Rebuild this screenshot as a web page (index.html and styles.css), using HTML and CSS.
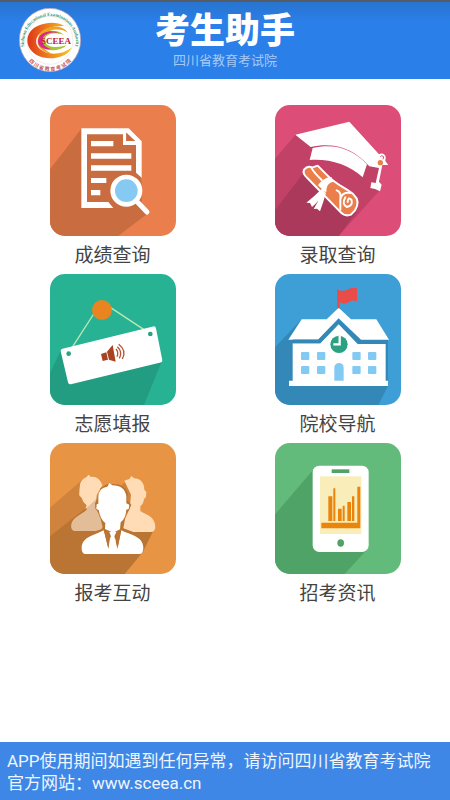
FILE: index.html
```html
<!DOCTYPE html>
<html lang="zh-CN">
<head>
    <meta charset="UTF-8">
    <meta name="viewport" content="width=device-width, initial-scale=1.0">
    <title>考生助手</title>
    <link rel="stylesheet" href="styles.css">
</head>
<body>
    <header class="header">
        <svg class="logo" viewBox="0 0 186 192" role="img" aria-label="SCEEA">
            <defs>
                <linearGradient id="swirl" x1="0" y1="0" x2="1" y2="0">
                    <stop offset="0" stop-color="#df3517"/>
                    <stop offset="0.5" stop-color="#ee8420"/>
                    <stop offset="1" stop-color="#fac51c"/>
                </linearGradient>
                <path id="ringTop" d="M17 123A78 81 0 1 1 169 123"/>
                <path id="ringBottom" d="M13 132A86 89 0 0 0 173 132"/>
            </defs>
            <ellipse cx="93" cy="96" rx="92" ry="95" fill="#fff" stroke="#b99bb0" stroke-width="2"/>
            <ellipse cx="93" cy="97" rx="69" ry="72" fill="none" stroke="#d3c3cc" stroke-width="1"/>
            <text class="logo-en"><textPath href="#ringTop" startOffset="50%" text-anchor="middle">Sichuan Educational Examinations Authority</textPath></text>
            <text class="logo-cn"><textPath href="#ringBottom" startOffset="50%" text-anchor="middle">四 川 省 教 育 考 试 院</textPath></text>
            <path fill="url(#swirl)" d="M136 54C106 35 52 46 33 72C10 108 40 150 92 151C126 151 151 137 157 119C128 143 78 143 58 118C36 87 74 52 136 54Z"/>
            <path fill="#eda51d" d="M146 74C133 50 83 51 64 75C43 107 65 134 99 137C70 126 57 102 73 82C90 62 126 59 146 74Z"/>
            <path fill="#a9c52f" d="M135 81C116 62 80 65 67 84C50 111 79 132 112 126C128 123 137 118 142 112C112 122 81 117 77 99C74 80 105 68 135 81Z"/>
            <path fill="#df2589" d="M121 77C100 63 69 71 60 88C49 111 70 128 96 123C76 118 63 101 73 87C82 75 102 70 121 77Z"/>
            <text class="logo-name" x="66" y="108">SCEEA</text>
        </svg>
        <div class="heading">
            <h1>考生助手</h1>
            <p class="subtitle">四川省教育考试院</p>
        </div>
    </header>

    <main class="menu">
        <a class="menu-item" href="#score">
            <svg class="tile orange" viewBox="29 29 378 393" aria-hidden="true">
                <path fill="#c96d40" d="M123 100L29 222V423H232L325 352L300 240V140L264 100Z"/>
                <path fill="#ea7f4d" d="M304 243L340 300V352H325L304 330Z"/>
                <path fill="#fff" fill-rule="evenodd" d="M123 99H265L304 138V247L287 232V149H248V117H140V320H204L219 338H123ZM258 112V137H284Z"/>
                <path fill="#c96d40" d="M258 112V137H284Z"/>
                <path fill="#fff" d="M152 137H219V153H152ZM152 174H273V190H152ZM152 210H273V226H152ZM152 248H198V263H152ZM152 284H180V300H152Z"/>
                <path d="M292 321L320 350" stroke="#fff" stroke-width="15" stroke-linecap="round"/>
                <circle cx="258" cy="286" r="41" fill="#86c9f2" stroke="#fff" stroke-width="14"/>
            </svg>
            <span>成绩查询</span>
        </a>

        <a class="menu-item" href="#admission">
            <svg class="tile pink" viewBox="29 29 378 393" aria-hidden="true">
                <path fill="#c24267" d="M90 118L29 190V423H219L342 286L345 205Z"/>
                <path fill="#aa395b" d="M114 234L29 345V423H219L274 350Z"/>
                <path fill="#fff" d="M90 118L252 79L341 177C348 171 362 176 361 188L360 197L369 209L351 209L341 259L349 268L344 288L329 281L315 278L318 261L331 263L341 218L312 213C266 158 204 139 136 155Z"/>
                <path fill="#fff" d="M142 158C205 144 260 160 305 207L292 246C248 206 193 190 133 194Z"/>
                <circle cx="345" cy="202" r="8" fill="#ea7f4b"/>
                <path d="M345 184Q349 178 355 184L353 192" fill="none" stroke="#dc4e78" stroke-width="3"/>
                <path fill="#ea7f4b" stroke="#fff" stroke-width="6" stroke-linejoin="round" d="M116 223Q111 236 126 248L224 349Q238 365 257 358L269 345Q286 317 265 298C247 280 213 270 183 237L157 211L140 217Q128 209 116 223Z"/>
                <path fill="none" stroke="#fff" stroke-width="6" stroke-linecap="round" d="M138 217Q145 231 169 254M214 285Q229 290 225 312V343M225 312Q230 288 256 293M240 306Q228 327 245 335Q265 330 258 313Q248 303 247 320"/>
                <path fill="#fff" d="M158 270C167 257 179 246 198 245L204 259C189 262 183 272 183 291Q175 289 171 282Z"/>
                <path fill="#fff" d="M173 277Q148 302 123 322L134 323L140 335Q162 317 178 286ZM171 287Q162 315 145 341L155 340L164 348Q174 321 182 292Z"/>
            </svg>
            <span>录取查询</span>
        </a>

        <a class="menu-item" href="#volunteer">
            <svg class="tile teal" viewBox="29 27 378 393" aria-hidden="true">
                <path fill="#239d82" d="M61 257L29 324V420H311L366 285Z"/>
                <path d="M97 245L162 144M211 128L311 194" stroke="#bde7b4" stroke-width="4"/>
                <circle cx="185" cy="135" r="30" fill="#e98420"/>
                <path fill="#fff" stroke="#fff" stroke-width="14" stroke-linejoin="round" d="M68 258L340 191L359 286L90 351Z"/>
                <circle cx="85" cy="266" r="7" fill="#28a184"/>
                <circle cx="330" cy="207" r="7" fill="#28a184"/>
                <path fill="#a84221" d="M182 267L198 262L203 284L187 288ZM200 260L217 240L226 290L206 284Z"/>
                <path d="M227 252Q236 262 230 275M231 245Q248 261 237 280M235 238Q260 257 246 282" fill="none" stroke="#b75436" stroke-width="4"/>
            </svg>
            <span>志愿填报</span>
        </a>

        <a class="menu-item" href="#college">
            <svg class="tile blue" viewBox="29 27 378 393" aria-hidden="true">
                <path fill="#3488b8" d="M109 163L29 247V420H339L368 363V220Z"/>
                <path fill="#fff" d="M82 235H165L220 178L277 237H361V347H368V363H71V347H82Z"/>
                <path fill="#fff" d="M109 163H184L220 128L257 163H333L371 224H287L220 160L158 224H69Z"/>
                <path d="M82 229H162L220 169L282 231H363" fill="none" stroke="#3488b8" stroke-width="11"/>
                <path fill="#e94c49" d="M215 73Q232 82 249 73Q259 65 275 70V109Q261 103 251 111Q237 120 223 112V130H215Z"/>
                <circle cx="221" cy="238" r="26" fill="#2aa183"/>
                <path d="M223 213V238H204" fill="none" stroke="#fff" stroke-width="7"/>
                <path fill="#83caf3" d="M207 347V308Q208 294 221 294Q234 294 235 308V347Z"/>
                <g fill="#83caf3">
                    <rect x="107" y="261" width="25" height="24" rx="3"/>
                    <rect x="155" y="261" width="25" height="24" rx="3"/>
                    <rect x="261" y="261" width="25" height="24" rx="3"/>
                    <rect x="308" y="261" width="25" height="24" rx="3"/>
                    <rect x="107" y="303" width="25" height="24" rx="3"/>
                    <rect x="155" y="303" width="25" height="24" rx="3"/>
                    <rect x="261" y="303" width="25" height="24" rx="3"/>
                    <rect x="308" y="303" width="25" height="24" rx="3"/>
                </g>
            </svg>
            <span>院校导航</span>
        </a>

        <a class="menu-item" href="#interact">
            <svg class="tile amber" viewBox="29 24 378 393" aria-hidden="true">
                <path fill="#d0833d" d="M126 134L29 218V417H200L300 291L266 130L190 200Z"/>
                <path fill="#ba7433" d="M168 194L29 304V417H253L308 350L337 291H300Z"/>
                <path fill="#ffdbb6" d="M252 137L268 131L273 123L281 130C300 130 313 145 312 165L318 170L317 186L311 192Q310 206 300 214L300 228C319 240 344 244 345 276Q344 291 331 291H279L249 280L254 252L268 221L272 179Z"/>
                <path fill="#e2bd98" d="M118 163Q117 135 138 127L145 119L151 126Q174 122 186 151L169 179L167 218L181 252L188 281L166 288H101Q90 285 93 267C99 245 121 241 139 224V211Q127 200 124 188L117 181Z"/>
                <path fill="#ffdbb6" d="M118 163Q117 135 138 127L145 119L151 126Q174 122 186 151L169 179L167 193L135 223L139 211Q127 200 124 188L117 181Z"/>
                <path fill="#ba7433" d="M180 160Q202 142 214 147Q253 145 263 175L260 194L273 209L266 225L258 235L246 276L255 289H180L189 273L182 241L165 221L164 205L172 190Z"/>
                <path fill="#fff" d="M174 185Q176 157 201 155L207 144L216 151Q253 151 258 184L258 205L267 209L265 222L258 224Q256 251 241 262L239 283L219 293L194 282L195 264Q180 254 175 225L168 222L169 208L174 206Z"/>
                <path fill="#fff" d="M190 286L204 340L209 304L216 326L229 304L232 340L243 286C266 299 307 302 309 337Q309 356 299 357H133Q123 354 124 337C127 303 168 300 190 286Z"/>
                <path fill="#ba7433" d="M191 286L207 294L209 307L204 341ZM242 287L227 293L224 311L231 341Z"/>
                <path fill="#fff" d="M207 292L218 287L228 292L222 304L226 318L217 332L208 318L212 304Z"/>
            </svg>
            <span>报考互动</span>
        </a>

        <a class="menu-item" href="#news">
            <svg class="tile green" viewBox="29 24 378 393" aria-hidden="true">
                <path fill="#50a366" d="M148 99L29 238V417H238L304 345Z"/>
                <rect x="142" y="92" width="168" height="259" rx="20" fill="#fff"/>
                <rect x="199" y="103" width="53" height="11" fill="#50a366"/>
                <rect x="164" y="124" width="124" height="173" fill="#f9eeb9"/>
                <path fill="#e9840d" d="M168 263H276V155H285V280H168ZM189 184H201V258H189ZM204 160H210V258H204ZM218 221H229V258H218ZM232 212H238V258H232ZM246 201H257V258H246ZM260 184H267V258H260Z"/>
                <ellipse cx="226" cy="324" rx="10" ry="11" fill="#50a366"/>
            </svg>
            <span>招考资讯</span>
        </a>
    </main>

    <footer class="footer">
        <p>APP使用期间如遇到任何异常，请访问四川省教育考试院官方网站：www.sceea.cn</p>
    </footer>
</body>
</html>
```

FILE: styles.css
```css
* {
    margin: 0;
    padding: 0;
    box-sizing: border-box;
}

body {
    min-height: 100vh;
    display: flex;
    flex-direction: column;
    background: #fff;
    color: #444;
    font-family: Roboto, 'Noto Sans CJK SC', sans-serif;
}

.header {
    display: grid;
    grid-template-columns: 1fr auto 1fr;
    height: 79px;
    padding: 6px 19px 0;
    border-top: 2px solid #555c66;
    background: linear-gradient(#2874cf, #2b7fe9 20px);
}

.logo {
    width: 62px;
    height: 64px;
}

.logo-en {
    fill: #2c9468;
    font: bold 14px 'Liberation Serif', serif;
}

.logo-cn {
    fill: #c4565a;
    font: bold 15px 'Noto Sans CJK SC', sans-serif;
}

.logo-name {
    fill: #c5202f;
    font: bold 27px 'Liberation Serif', serif;
}

.heading {
    padding-top: 2px;
    text-align: center;
}

h1 {
    color: #fff;
    font-size: 35px;
    font-weight: 900;
    line-height: 44px;
}

.subtitle {
    color: #a5c9f6;
    font-size: 13px;
    line-height: 14px;
}

.menu {
    flex: 1;
    display: grid;
    grid-template-columns: 1fr 1fr;
    align-content: start;
    gap: 5px 0;
    padding: 26px 0;
}

.menu-item {
    display: flex;
    flex-direction: column;
    align-items: center;
    gap: 6px;
    color: #444;
    font-size: 19px;
    line-height: 27px;
    text-decoration: none;
}

.tile {
    width: 126px;
    height: 131px;
    border-radius: 15px;
}

.orange {
    background: #ea7f4d;
}

.pink {
    background: #dc4e78;
}

.teal {
    background: #28b294;
}

.blue {
    background: #3d9fd5;
}

.amber {
    background: #e79545;
}

.green {
    background: #62bb7b;
}

.footer {
    padding: 8px 7px 6px;
    background: #3f87e6;
    color: #eef5ff;
    font-size: 17px;
    line-height: 22px;
}
```
